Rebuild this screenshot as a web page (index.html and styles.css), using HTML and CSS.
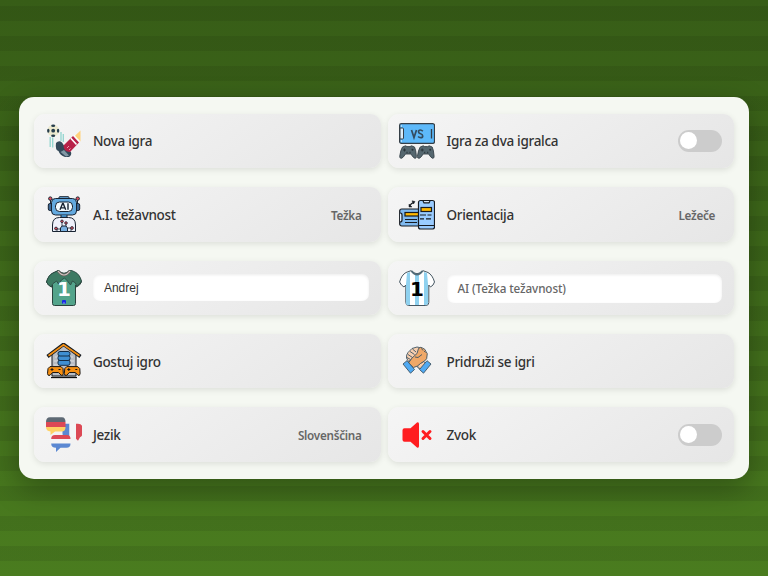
FILE: index.html
```html
<!DOCTYPE html>
<html lang="sl">
<head>
<meta charset="utf-8">
<title>Nogomet</title>
<link rel="stylesheet" href="styles.css">
</head>
<body>
<main class="panel">
  <div class="card">
    <svg class="icon" viewBox="0 0 36 36">
      <circle cx="7.200" cy="7.700" r="5.900" fill="#ece9cf"/>
      <g fill="#263d4c"><circle cx="7.200" cy="7.700" r="1.900"/><ellipse cx="7.200" cy="2.700" rx="2" ry="1.200"/><ellipse cx="7.200" cy="12.700" rx="2" ry="1.200"/><ellipse cx="2.300" cy="7.700" rx="1.200" ry="2"/><ellipse cx="12.100" cy="7.700" rx="1.200" ry="2"/></g>
      <path d="M4.200 14v10M6.700 14.500v10M15 9v9M17.300 11v8" stroke="#92d5cf" stroke-width="1.300"/>
      <path d="M10 20q3-3 6-.5l3 4.500 6 5q1 3-2 5h-4q-5-1.500-6.500-6-3.500-1-2.500-8z" fill="#34495a"/>
      <path d="M14.500 29l3.500-2 5 5.500-3 1z" fill="#8298a5"/>
      <path d="M17.500 22.500l9.500-9.500 6 6.500-9 9.500q-6.500-.5-6.500-6.500z" fill="#b82148"/>
      <path d="M24.800 15.200l5.700 6.300M28.300 12.300l5.400 6" stroke="#fff" stroke-width="1.600"/><path d="M21 25l2-2M23 27l1.500-1.500" stroke="#e799aa"/>
      <path d="M29 12.800L34.500 7.500V18.500z" fill="#ffd17b"/>
    </svg>
    <span class="label">Nova igra</span>
  </div>

  <div class="card">
    <svg class="icon" viewBox="0 0 36 36">
      <rect x=".6" y=".7" width="34.900" height="19.700" rx="1.800" fill="#5db9fa" stroke="#343e47" stroke-width="1.200"/>
      <path d="M1 5h2.500q1 0 1 1v9q0 1-1 1H1z" fill="#dceefa" stroke="#343e47"/>
      <path d="M32.500 6v9.500" stroke="#343e47" stroke-width="1.300"/>
      <path d="M2 3h1M2 18h1" stroke="#fff"/>
      <path d="M12.500 7l2.500 7.500L17.500 7M23.800 8.200q-1-1.200-2.500-1.200-1.800 0-1.800 1.700 0 1.400 2.100 2t2.100 2.200q0 1.800-2 1.800-1.500 0-2.600-1.200" fill="none" stroke="#344c60" stroke-width="1.700"/>
      <g id="pad"><path d="M3.500 24l3-1.200 1.500.8h3l1.500-.8 3 1.200q1.500 3 1.900 9.500 0 2-1.500 1.800-1.500-.3-4-4.300H6.500q-2.500 4-4 4.300Q.600 35.500.700 33.500 1.500 27 3.500 24z" fill="#55676f" stroke="#39444b" stroke-width=".9"/>
      <path d="M5.500 25.500v3M4 27h3" stroke="#2a343a"/><circle cx="13.500" cy="26.800" r="1" fill="#2a343a"/><path d="M7.500 29.500h1M10.500 29.500h1" stroke="#2a343a" stroke-width="1.300"/></g>
      <use href="#pad" x="17.700"/>
    </svg>
    <span class="label">Igra za dva igralca</span>
    <span class="toggle"></span>
  </div>

  <div class="card">
    <svg class="icon" viewBox="0 0 36 36" stroke="#182332" stroke-width="1">
      <path d="M4.500 3v7M31.500 3v7" /><circle cx="4.300" cy="2.600" r="1.700" fill="#e9505f"/><circle cx="31.700" cy="2.600" r="1.700" fill="#e9505f"/>
      <path d="M12.500 2.500l1-1.800h9l1 1.800" fill="#6aaee0"/>
      <rect x="2.300" y="7.500" width="4" height="7" rx="1.500" fill="#3d6794"/><rect x="29.700" y="7.500" width="4" height="7" rx="1.500" fill="#3d6794"/>
      <rect x="5.500" y="2.500" width="25" height="16.500" rx="4" fill="#63a9df"/>
      <rect x="9.500" y="6" width="17" height="9.500" rx="4" fill="#f3faff"/>
      <path d="M14 13.800l2.600-6.300h.6l2.500 6.300M15 11.900h3.700M22 7.300v6.500" fill="none" stroke-width="1.400"/>
      <path d="M15 19v3h6v-3" fill="#4288bd"/>
      <path d="M6.500 35.500V29q0-7.500 7-7.500h9q7 0 7 7.500v6.500z" fill="#eef0fa"/>
      <path d="M14.500 35.500V32l1.500-2h4l1.500 2v3.500z" fill="#78afe0"/>
      <path d="M16 30v-4M20 30v-2.500M14 33h-4M22 32h4M11 35v-3M25 35v-3" fill="none" stroke-width=".8"/>
      <g fill="#d9505f" stroke-width=".8"><circle cx="16" cy="25.300" r="1.300"/><circle cx="20" cy="27" r="1.300"/><circle cx="10" cy="32.500" r="1.400"/><circle cx="26" cy="32" r="1.400"/></g>
    </svg>
    <span class="label">A.I. težavnost</span><span class="value">Težka</span>
  </div>

  <div class="card">
    <svg class="icon" viewBox="0 0 36 36" stroke="#171b21" stroke-width="1.200">
      <rect x=".7" y="13" width="22" height="17" rx="2" fill="#7fb9ef"/><path d="M1 17q2 0 2 2v5q0 2-2 2" fill="#dcecff"/>
      <rect x="6" y="16.500" width="14" height="3.500" fill="#ffb900"/><path d="M6 23.500h12M6 26.500h12"/>
      <rect x="19.500" y="4.500" width="16" height="28.500" rx="2" fill="#9accff"/>
      <path d="M24 5l1 1.800h5L31 5" fill="#dcecff"/><rect x="22" y="11.500" width="10.500" height="4" fill="#ffb900"/>
      <path d="M21 19h6M28.500 19h4M21 22.800h4M27 22.800h5M20 29.500h15"/>
      <path d="M11 9.500q1-2 3.500-3" fill="none"/><path d="M10 8v3h3zM13 4.800l3 .7-1.500 2.500z" fill="#171b21" stroke-width=".5"/>
    </svg>
    <span class="label">Orientacija</span><span class="value">Ležeče</span>
  </div>

  <div class="card">
    <svg class="icon" viewBox="0 0 36 36">
      <path d="M12 .7L7 3Q2.500 5 .5 12q1.500 3.500 5 5l1-2v18.500q0 2 2 2h19q2 0 2-2V15l1 2q3.500-1.500 5-5-2-7-6.500-9l-5-2.300q-6 7-12 0z" fill="#53a48b" stroke="#29433d"/>
      <path d="M12 .7L7 3Q2.500 5 .5 12q1.500 3.500 5 5l1-3 4-3 2 3 3-4 3-2 3 3 3 4 2-4 3 2 1 3q3.500-1.500 5-5-2-7-6.500-9l-5-2.300q-6 7-12 0z" fill="#3d7a63" stroke="#29433d" stroke-width=".8"/>
      <path d="M12 1q6 8 12 0" fill="none" stroke="#6d5f5c" stroke-width="2.400"/><path d="M12 1q6 8 12 0" fill="none" stroke="#d5d0cc" stroke-width="1.200"/>
      <text class="number" x="18" y="25.500" fill="#fff">1</text>
      <rect x="16" y="30" width="4" height="3.800" rx="1" fill="#1729e8"/><path d="M17.500 33h1" stroke="#fff"/>
    </svg>
    <input class="field" type="text" value="Andrej" aria-label="Igralec 1">
  </div>

  <div class="card">
    <svg class="icon" viewBox="0 0 36 36">
      <path d="M12 .7L7 2.500Q2.500 5 .6 12q1.500 3.500 4.400 5l1.800-2v17.500q0 3 3 3h17q3 0 3-3V15l1.700 2q3-1.500 4-5-2-7-6.500-9.500L24 .7q-6 6-12 0z" fill="#fff" stroke="#455661"/>
      <path d="M8 3l3-1v33H8q-1 0-1-2V14zM16 5h4v30h-4zM25 2l3 1 1 11v20l-2 1h-2z" fill="#8fd1ef"/>
      <path d="M12.500 1q5.500 7 11 0" fill="none" stroke="#526c79" stroke-width="2"/>
      <text class="number" x="18" y="25.500" fill="#000">1</text>
    </svg>
    <div class="field field-ai">AI (Težka težavnost)</div>
  </div>

  <div class="card">
    <svg class="icon" viewBox="0 0 36 36">
      <path d="M6 33V11L18 2l12 9v22z" fill="#b9bdc4" stroke="#161b21"/><path d="M9 14h18M8 18h20M8 22h20" stroke="#dadce0"/>
      <path d="M1.500 13.500L17.500 1.300l17 12.200" fill="none" stroke="#161b21" stroke-width="3.500"/><path d="M2.500 12.800L17.500 1.800 33.500 12.800" fill="none" stroke="#f58f12" stroke-width="1.700"/>
      <g fill="#3f8fd2" stroke="#142c45"><rect x="12" y="17" width="12" height="5.300" rx="2"/><rect x="12" y="12.500" width="12" height="5" rx="2"/><rect x="12" y="8.500" width="12" height="4.500" rx="2"/></g>
      <g id="pad2"><path d="M4 23.600h11l2 2 .3 5q-.300 2.500-2 1.700L12.500 29.500h-6L4 32.300q-2.300.8-2.500-1.700l.5-5z" fill="#f58f12" stroke="#1b1714"/><path d="M6 25v3M4.500 26.500h3M12.500 26.500h2" stroke="#1b1714"/></g><use href="#pad2" x="16.800"/>
      <path d="M5 34.500h26" stroke="#111" stroke-width="1.300"/>
    </svg>
    <span class="label">Gostuj igro</span>
  </div>

  <div class="card">
    <svg class="icon" viewBox="0 0 36 36" stroke="#3d5363" stroke-width=".9" stroke-linejoin="round">
      <path d="M18.500 22l6-3.500 3.500 2.500-4.500 5-4.500-1z" fill="#f7ceae"/>
      <path d="M9.500 18.500L7.500 15q-.5-3 1.500-5.500l4-4 5-1.500 5 1-6 9z" fill="#f7ceae"/>
      <path d="M9 11.500l4.500 3M11 8.500l4.500 3M13.500 6l3.500 3M8 14.500l3.500 2" fill="none"/>
      <path d="M9.500 20l3.500-5 5-4.500 1.500-5q2-2 4-.5 3 1 3.500 3.500 2 2 1 4.500.5 3-2.500 5l-4 2.500-3 2.500-4 1.500z" fill="#efa868"/>
      <path d="M16 14l3 .5 4-3M22.500 5.500l1.500 2M25 8l1.500 1.500" fill="none"/>
      <path d="M4 21l4-3.300 7.500 8.800-4 3.700z" fill="#50aaf3"/><path d="M32 21l-4-3.300-7.500 8.800 4 3.700z" fill="#50aaf3"/>
    </svg>
    <span class="label">Pridruži se igri</span>
  </div>

  <div class="card">
    <svg class="icon" viewBox="0 0 36 36">
      <path d="M16.500 6.700h7v13.500h-3q-4 0-4-3.500z" fill="#5b88d2"/><path d="M23.500 6.700h6.500v13.500h-6.500z" fill="#f4f4f5"/><path d="M30 6.700h2q4.500 0 4.500 4.500v5q0 3-2.500 4l-2 3.500-2-2z" fill="#dc4955"/>
      <path d="M4 .3h12q3.500 0 3.500 4.700H0Q0 .3 4 .3z" fill="#5e6974"/><path d="M0 5h19.500v5H0z" fill="#dc4955"/><path d="M0 10h19.500q0 4.500-4 4.500H9L4.500 18v-3.500Q0 14 0 10z" fill="#ffd164"/>
      <path d="M9 18h12q3.500 0 3.500 4H5.200q0-4 3.800-4z" fill="#dc4955"/><path d="M5.200 22h19.300v4.500H5.200z" fill="#f4f4f5"/><path d="M5.200 26.500h19.300q0 4.300-4 4.300h-6L10 35v-4.200q-4.800 0-4.800-4.300z" fill="#5b88d2"/>
    </svg>
    <span class="label">Jezik</span><span class="value">Slovenščina</span>
  </div>

  <div class="card">
    <svg class="icon" viewBox="0 0 36 36">
      <path d="M5.500 11.300h6L18 5.500q2-.8 2 1.500v22q0 2.300-2 1.500l-6.500-5.700h-6q-2 0-2-2v-9.500q0-2 2-2z" fill="#ff1d20"/>
      <path d="M24 14.500l7 7M31 14.500l-7 7" stroke="#ff1d20" stroke-width="3" stroke-linecap="round"/>
    </svg>
    <span class="label">Zvok</span><span class="toggle"></span>
  </div>
</main>
</body>
</html>
```

FILE: styles.css
```css
* { box-sizing: border-box; }
body {
  margin: 0;
  height: 576px;
  overflow: hidden;
  display: flex;
  align-items: center;
  justify-content: center;
  font-family: "Noto Sans", sans-serif;
  background:
    repeating-linear-gradient(0deg, transparent 0 15px, rgba(0, 0, 0, .08) 15px 30px),
    linear-gradient(180deg, #375d17, #4a7c1f);
}
.panel {
  width: 729.2px;
  height: 382.4px;
  padding: 17px 14.500px;
  display: grid;
  grid-template-columns: 1fr 1fr;
  grid-auto-rows: 54.400px;
  gap: 19px 7px;
  border-radius: 15px;
  background: #f5f8f2;
  box-shadow: 0 10px 30px rgba(0, 0, 0, .3);
}
.card {
  display: flex;
  align-items: center;
  padding: 0 12px;
  border-radius: 11px;
  background: linear-gradient(145deg, #f5f5f5, #e6e6e6);
  box-shadow: 0 2px 6px rgba(0, 0, 0, .1);
}
.icon {
  width: 36px;
  height: 36px;
  flex: none;
  margin-right: 11px;
}
.card:nth-child(even) .icon {
  margin-left: -.7px;
  margin-right: 11.700px;
}
.label {
  padding-top: 1px;
  color: #333;
  font-size: 13.500px;
  font-weight: 500;
  letter-spacing: -.3px;
}
.value {
  padding-top: 1px;
  margin-left: auto;
  margin-right: 7px;
  color: #666;
  font-size: 11.700px;
  font-weight: 600;
  letter-spacing: -.28px;
}
.toggle {
  width: 44.500px;
  height: 22px;
  margin-left: auto;
  padding: 2.500px;
  border-radius: 11px;
  background: #ccc;
}
.toggle::before {
  content: "";
  display: block;
  width: 17px;
  height: 17px;
  border-radius: 50%;
  background: #fff;
}
.field {
  flex: 1;
  min-width: 0;
  height: 27px;
  padding: 0 11px;
  border: 0;
  border-radius: 7px;
  background: #fff;
  box-shadow: inset 0 1px 3px rgba(0, 0, 0, .08);
  color: #333;
  font: 12px "Liberation Sans", sans-serif;
}
.field-ai {
  height: 29.500px;
  margin-top: 1px;
  color: #666;
  font: 500 11.700px/29px "Noto Sans", sans-serif;
  letter-spacing: -.1px;
}
.number {
  font: bold 20px "DejaVu Sans", sans-serif;
  text-anchor: middle;
}
```
